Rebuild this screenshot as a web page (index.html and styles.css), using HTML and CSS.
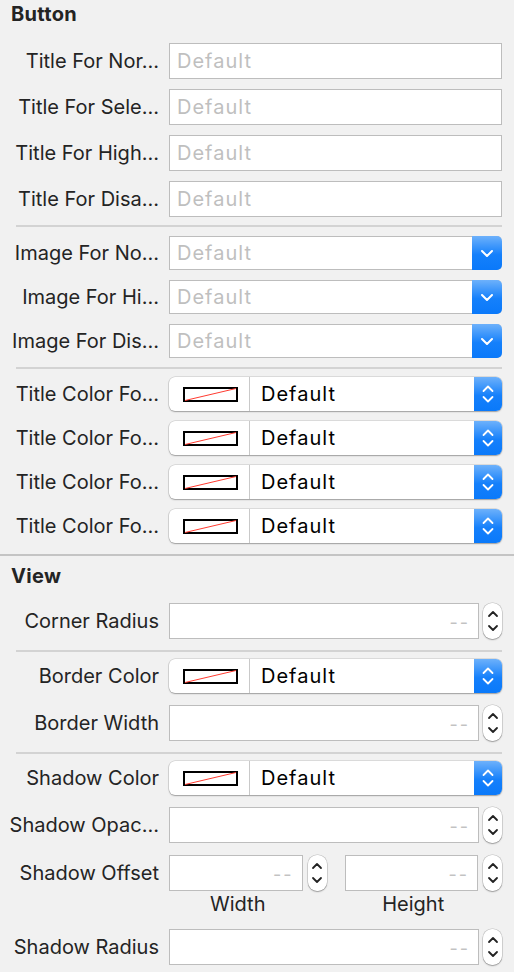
FILE: index.html
```html
<!DOCTYPE html>
<html>
<head>
<meta charset="utf-8">
<link rel="stylesheet" href="styles.css">
</head>
<body>
<div class="panel">
  <section class="section section-button">
    <h2 class="section-title">Button</h2>
    <div class="group group-fields">
      <div class="row"><span class="label">Title For Nor…</span><div class="textfield"><span class="placeholder">Default</span></div></div>
      <div class="row"><span class="label">Title For Sele…</span><div class="textfield"><span class="placeholder">Default</span></div></div>
      <div class="row"><span class="label">Title For High…</span><div class="textfield"><span class="placeholder">Default</span></div></div>
      <div class="row"><span class="label">Title For Disa…</span><div class="textfield"><span class="placeholder">Default</span></div></div>
    </div>
    <hr class="sep">
    <div class="group group-popups">
      <div class="row row-popup"><span class="label">Image For No…</span>
        <div class="combo"><span class="placeholder">Default</span><span class="combo-btn"><svg width="12" height="7" viewBox="0 0 12 7"><polyline points="1,1 6,6 11,1" fill="none" stroke="#fff" stroke-width="2" stroke-linecap="round" stroke-linejoin="round"/></svg></span></div></div>
      <div class="row row-popup"><span class="label">Image For Hi…</span>
        <div class="combo"><span class="placeholder">Default</span><span class="combo-btn"><svg width="12" height="7" viewBox="0 0 12 7"><polyline points="1,1 6,6 11,1" fill="none" stroke="#fff" stroke-width="2" stroke-linecap="round" stroke-linejoin="round"/></svg></span></div></div>
      <div class="row row-popup"><span class="label">Image For Dis…</span>
        <div class="combo"><span class="placeholder">Default</span><span class="combo-btn"><svg width="12" height="7" viewBox="0 0 12 7"><polyline points="1,1 6,6 11,1" fill="none" stroke="#fff" stroke-width="2" stroke-linecap="round" stroke-linejoin="round"/></svg></span></div></div>
    </div>
    <hr class="sep">
    <div class="group group-colors">
      <div class="row row-popup"><span class="label">Title Color Fo…</span>
        <div class="colorpop"><span class="well"><svg class="swatch" width="55" height="15" viewBox="0 0 55 15"><rect x="1" y="1" width="53" height="13" fill="#fff" stroke="#000" stroke-width="2"/><line x1="2" y1="13.5" x2="53" y2="1.5" stroke="#ff3b30" stroke-width="1"/></svg></span><span class="colorname">Default</span><span class="updown"><svg width="12" height="20" viewBox="0 0 12 20"><polyline points="1.5,7 6,2.5 10.5,7" fill="none" stroke="#fff" stroke-width="1.8" stroke-linecap="round" stroke-linejoin="round"/><polyline points="1.5,13 6,17.5 10.5,13" fill="none" stroke="#fff" stroke-width="1.8" stroke-linecap="round" stroke-linejoin="round"/></svg></span></div></div>
      <div class="row row-popup"><span class="label">Title Color Fo…</span>
        <div class="colorpop"><span class="well"><svg class="swatch" width="55" height="15" viewBox="0 0 55 15"><rect x="1" y="1" width="53" height="13" fill="#fff" stroke="#000" stroke-width="2"/><line x1="2" y1="13.5" x2="53" y2="1.5" stroke="#ff3b30" stroke-width="1"/></svg></span><span class="colorname">Default</span><span class="updown"><svg width="12" height="20" viewBox="0 0 12 20"><polyline points="1.5,7 6,2.5 10.5,7" fill="none" stroke="#fff" stroke-width="1.8" stroke-linecap="round" stroke-linejoin="round"/><polyline points="1.5,13 6,17.5 10.5,13" fill="none" stroke="#fff" stroke-width="1.8" stroke-linecap="round" stroke-linejoin="round"/></svg></span></div></div>
      <div class="row row-popup"><span class="label">Title Color Fo…</span>
        <div class="colorpop"><span class="well"><svg class="swatch" width="55" height="15" viewBox="0 0 55 15"><rect x="1" y="1" width="53" height="13" fill="#fff" stroke="#000" stroke-width="2"/><line x1="2" y1="13.5" x2="53" y2="1.5" stroke="#ff3b30" stroke-width="1"/></svg></span><span class="colorname">Default</span><span class="updown"><svg width="12" height="20" viewBox="0 0 12 20"><polyline points="1.5,7 6,2.5 10.5,7" fill="none" stroke="#fff" stroke-width="1.8" stroke-linecap="round" stroke-linejoin="round"/><polyline points="1.5,13 6,17.5 10.5,13" fill="none" stroke="#fff" stroke-width="1.8" stroke-linecap="round" stroke-linejoin="round"/></svg></span></div></div>
      <div class="row row-popup"><span class="label">Title Color Fo…</span>
        <div class="colorpop"><span class="well"><svg class="swatch" width="55" height="15" viewBox="0 0 55 15"><rect x="1" y="1" width="53" height="13" fill="#fff" stroke="#000" stroke-width="2"/><line x1="2" y1="13.5" x2="53" y2="1.5" stroke="#ff3b30" stroke-width="1"/></svg></span><span class="colorname">Default</span><span class="updown"><svg width="12" height="20" viewBox="0 0 12 20"><polyline points="1.5,7 6,2.5 10.5,7" fill="none" stroke="#fff" stroke-width="1.8" stroke-linecap="round" stroke-linejoin="round"/><polyline points="1.5,13 6,17.5 10.5,13" fill="none" stroke="#fff" stroke-width="1.8" stroke-linecap="round" stroke-linejoin="round"/></svg></span></div></div>
    </div>
  </section>
  <hr class="sep-full">
  <section class="section section-view">
    <h2 class="section-title">View</h2>
    <div class="row"><span class="label">Corner Radius</span>
      <div class="numeric"><div class="textfield num"><span class="dashes">--</span></div><span class="stepper"><svg width="12" height="26" viewBox="0 0 12 26"><polyline points="2,8 6,4 10,8" fill="none" stroke="#222" stroke-width="1.8" stroke-linecap="round" stroke-linejoin="round"/><polyline points="2,18 6,22 10,18" fill="none" stroke="#222" stroke-width="1.8" stroke-linecap="round" stroke-linejoin="round"/></svg></span></div></div>
    <hr class="sep sep-view">
    <div class="row row-popup"><span class="label">Border Color</span>
      <div class="colorpop"><span class="well"><svg class="swatch" width="55" height="15" viewBox="0 0 55 15"><rect x="1" y="1" width="53" height="13" fill="#fff" stroke="#000" stroke-width="2"/><line x1="2" y1="13.5" x2="53" y2="1.5" stroke="#ff3b30" stroke-width="1"/></svg></span><span class="colorname">Default</span><span class="updown"><svg width="12" height="20" viewBox="0 0 12 20"><polyline points="1.5,7 6,2.5 10.5,7" fill="none" stroke="#fff" stroke-width="1.8" stroke-linecap="round" stroke-linejoin="round"/><polyline points="1.5,13 6,17.5 10.5,13" fill="none" stroke="#fff" stroke-width="1.8" stroke-linecap="round" stroke-linejoin="round"/></svg></span></div></div>
    <div class="row row-after-pop"><span class="label">Border Width</span>
      <div class="numeric"><div class="textfield num"><span class="dashes">--</span></div><span class="stepper"><svg width="12" height="26" viewBox="0 0 12 26"><polyline points="2,8 6,4 10,8" fill="none" stroke="#222" stroke-width="1.8" stroke-linecap="round" stroke-linejoin="round"/><polyline points="2,18 6,22 10,18" fill="none" stroke="#222" stroke-width="1.8" stroke-linecap="round" stroke-linejoin="round"/></svg></span></div></div>
    <hr class="sep sep-view">
    <div class="row row-popup"><span class="label">Shadow Color</span>
      <div class="colorpop"><span class="well"><svg class="swatch" width="55" height="15" viewBox="0 0 55 15"><rect x="1" y="1" width="53" height="13" fill="#fff" stroke="#000" stroke-width="2"/><line x1="2" y1="13.5" x2="53" y2="1.5" stroke="#ff3b30" stroke-width="1"/></svg></span><span class="colorname">Default</span><span class="updown"><svg width="12" height="20" viewBox="0 0 12 20"><polyline points="1.5,7 6,2.5 10.5,7" fill="none" stroke="#fff" stroke-width="1.8" stroke-linecap="round" stroke-linejoin="round"/><polyline points="1.5,13 6,17.5 10.5,13" fill="none" stroke="#fff" stroke-width="1.8" stroke-linecap="round" stroke-linejoin="round"/></svg></span></div></div>
    <div class="row row-after-pop"><span class="label">Shadow Opac…</span>
      <div class="numeric"><div class="textfield num"><span class="dashes">--</span></div><span class="stepper"><svg width="12" height="26" viewBox="0 0 12 26"><polyline points="2,8 6,4 10,8" fill="none" stroke="#222" stroke-width="1.8" stroke-linecap="round" stroke-linejoin="round"/><polyline points="2,18 6,22 10,18" fill="none" stroke="#222" stroke-width="1.8" stroke-linecap="round" stroke-linejoin="round"/></svg></span></div></div>
    <div class="row row-offset"><span class="label">Shadow Offset</span>
      <div class="offset-pair">
        <div class="offset-item"><div class="textfield num"><span class="dashes">--</span></div><span class="stepper"><svg width="12" height="26" viewBox="0 0 12 26"><polyline points="2,8 6,4 10,8" fill="none" stroke="#222" stroke-width="1.8" stroke-linecap="round" stroke-linejoin="round"/><polyline points="2,18 6,22 10,18" fill="none" stroke="#222" stroke-width="1.8" stroke-linecap="round" stroke-linejoin="round"/></svg></span><span class="caption">Width</span></div>
        <div class="offset-item"><div class="textfield num"><span class="dashes">--</span></div><span class="stepper"><svg width="12" height="26" viewBox="0 0 12 26"><polyline points="2,8 6,4 10,8" fill="none" stroke="#222" stroke-width="1.8" stroke-linecap="round" stroke-linejoin="round"/><polyline points="2,18 6,22 10,18" fill="none" stroke="#222" stroke-width="1.8" stroke-linecap="round" stroke-linejoin="round"/></svg></span><span class="caption">Height</span></div>
      </div></div>
    <div class="row row-radius"><span class="label">Shadow Radius</span>
      <div class="numeric"><div class="textfield num"><span class="dashes">--</span></div><span class="stepper"><svg width="12" height="26" viewBox="0 0 12 26"><polyline points="2,8 6,4 10,8" fill="none" stroke="#222" stroke-width="1.8" stroke-linecap="round" stroke-linejoin="round"/><polyline points="2,18 6,22 10,18" fill="none" stroke="#222" stroke-width="1.8" stroke-linecap="round" stroke-linejoin="round"/></svg></span></div></div>
  </section>
</div>
</body>
</html>
```
FILE: styles.css
```css
* { box-sizing: border-box; }
html, body { margin: 0; padding: 0; }
body {
  background: #f1f1f1;
  font-family: Inter, "Helvetica Neue", Roboto, sans-serif;
  color: #242424;
  width: 514px;
  height: 972px;
  overflow: hidden;
}
.panel { display: flex; flex-direction: column; }

.section-title {
  margin: 0;
  padding-left: 11px;
  font-size: 20px;
  font-weight: 700;
  line-height: 22px;
  letter-spacing: 0.3px;
  color: #242424;
}
.section-button .section-title { padding-top: 3px; height: 43px; }
.section-view .section-title { padding-top: 9px; height: 47px; }

.group { display: flex; flex-direction: column; gap: 10px; }

.row {
  display: grid;
  grid-template-columns: 159px 1fr;
  column-gap: 10px;
  align-items: start;
  padding-right: 12px;
}
.label {
  text-align: right;
  font-size: 20px;
  line-height: 36px;
  white-space: nowrap;
  color: #242424;
}
.row-popup .label { line-height: 34px; }

.textfield {
  height: 36px;
  background: #fff;
  border: 1px solid #bdbdbd;
  display: flex;
  align-items: center;
  padding: 0 7px;
}
.placeholder {
  font-size: 20px;
  letter-spacing: 1px;
  color: #bfbfbf;
}

.sep {
  border: 0;
  height: 2px;
  background: #d3d3d3;
  margin: 8px 12px 9px 16px;
}
.group-popups + .sep { margin-top: 9px; margin-bottom: 8px; }

.combo {
  height: 34px;
  background: #fff;
  border: 1px solid #bdbdbd;
  border-right: 0;
  border-radius: 0 5px 5px 0;
  display: flex;
  align-items: center;
  padding-left: 7px;
}
.combo .placeholder { flex: 1; }
.combo-btn {
  width: 30px;
  height: 34px;
  margin-top: -1px;
  margin-bottom: -1px;
  border-radius: 0 5px 5px 0;
  background: linear-gradient(#6db1fb, #1580fb 55%, #0a79fa);
  display: flex;
  align-items: center;
  justify-content: center;
}

.colorpop {
  height: 34px;
  background: #fff;
  border-radius: 6px;
  box-shadow: 0 0 0 0.5px rgba(0,0,0,0.18), 0 1px 1.5px rgba(0,0,0,0.28);
  display: flex;
  align-items: stretch;
  overflow: hidden;
}
.well {
  width: 81px;
  border-right: 1px solid #c9c9c9;
  display: flex;
  align-items: center;
  justify-content: center;
  padding-left: 2px;
}
.swatch { display: block; }
.colorname {
  flex: 1;
  font-size: 20px;
  letter-spacing: 1px;
  color: #000;
  display: flex;
  align-items: center;
  padding-left: 11px;
}
.updown {
  width: 28px;
  background: linear-gradient(#6db1fb, #1580fb 55%, #0a79fa);
  display: flex;
  align-items: center;
  justify-content: center;
}

.sep-full {
  border: 0;
  height: 2px;
  background: #c4c4c4;
  margin: 11px 0 0 0;
}

.numeric {
  display: grid;
  grid-template-columns: 1fr 19px;
  column-gap: 4px;
}
.num { justify-content: flex-end; padding-right: 8px; }
.dashes {
  font-size: 18px;
  color: #c2c2c2;
  letter-spacing: 2px;
  line-height: 1;
  margin-top: 4px;
}
.stepper {
  height: 36px;
  background: #fff;
  border-radius: 9px;
  box-shadow: 0 0 0 0.5px rgba(0,0,0,0.2), 0 1px 1.5px rgba(0,0,0,0.28);
  display: flex;
  align-items: center;
  justify-content: center;
}

.sep-view { margin: 11px 12px 7px 16px; }
.row-after-pop { margin-top: 12px; }

.row-offset { margin-top: 12px; }
.offset-pair { display: flex; gap: 18px; }
.offset-item {
  flex: 1;
  display: grid;
  grid-template-columns: 1fr 19px;
  column-gap: 5px;
}
.caption {
  grid-column: 1;
  text-align: center;
  font-size: 20px;
  line-height: 26px;
  padding-left: 4px;
}
.row-radius { margin-top: 12px; }
```
